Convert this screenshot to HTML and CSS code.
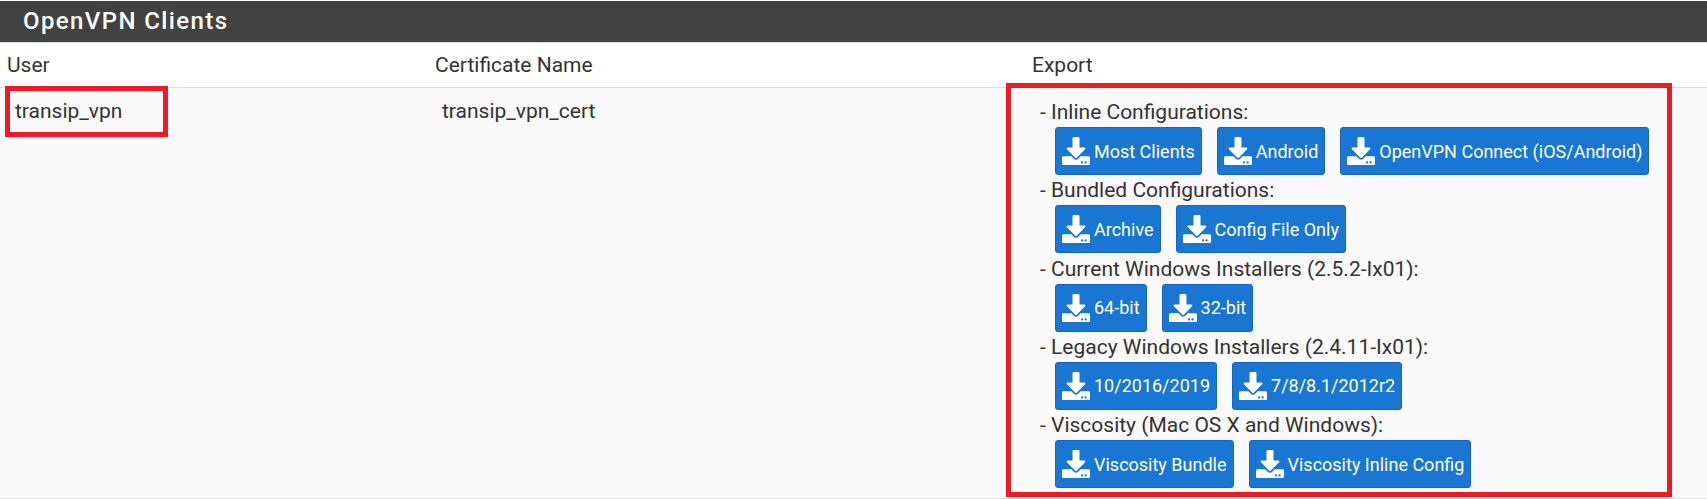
FILE: index.html
```html
<!DOCTYPE html>
<html lang="en">
<head>
<meta charset="utf-8">
<title>OpenVPN Clients</title>
<link rel="stylesheet" href="styles.css">
</head>
<body>
<svg class="defs" width="0" height="0" aria-hidden="true">
  <symbol id="dl" viewBox="0 0 512 512">
    <path d="M216 0h80c13.300 0 24 10.700 24 24v168h87.700c17.800 0 26.700 21.500 14.100 34.100L269.700 378.300c-7.500 7.500-19.800 7.500-27.300 0L90.100 226.100c-12.600-12.600-3.700-34.100 14.100-34.100H192V24c0-13.300 10.700-24 24-24zm296 376v112c0 13.300-10.700 24-24 24H24c-13.300 0-24-10.700-24-24V376c0-13.300 10.700-24 24-24h146.700l49 49c20.100 20.100 52.500 20.100 72.600 0l49-49H488c13.300 0 24 10.700 24 24zm-124 88c0-11-9-20-20-20s-20 9-20 20 9 20 20 20 20-9 20-20zm64 0c0-11-9-20-20-20s-20 9-20 20 9 20 20 20 20-9 20-20z"/>
  </symbol>
</svg>
<main class="panel">
  <h2 class="panel-title">OpenVPN Clients</h2>
  <div class="table">
    <div class="head">
      <div class="col-user">User</div>
      <div class="col-cert">Certificate Name</div>
      <div class="col-export">Export</div>
    </div>
    <div class="row">
      <div class="col-user cell">transip_vpn</div>
      <div class="col-cert cell">transip_vpn_cert</div>
      <div class="col-export cell-export">
        <div class="group">
          <div class="label">- Inline Configurations:</div>
          <div class="buttons">
            <a class="btn"><svg class="ico"><use href="#dl"/></svg>Most Clients</a>
            <a class="btn"><svg class="ico"><use href="#dl"/></svg>Android</a>
            <a class="btn"><svg class="ico"><use href="#dl"/></svg>OpenVPN Connect (iOS/Android)</a>
          </div>
        </div>
        <div class="group">
          <div class="label">- Bundled Configurations:</div>
          <div class="buttons">
            <a class="btn"><svg class="ico"><use href="#dl"/></svg>Archive</a>
            <a class="btn"><svg class="ico"><use href="#dl"/></svg>Config File Only</a>
          </div>
        </div>
        <div class="group">
          <div class="label">- Current Windows Installers (2.5.2-Ix01):</div>
          <div class="buttons">
            <a class="btn"><svg class="ico"><use href="#dl"/></svg>64-bit</a>
            <a class="btn"><svg class="ico"><use href="#dl"/></svg>32-bit</a>
          </div>
        </div>
        <div class="group">
          <div class="label">- Legacy Windows Installers (2.4.11-Ix01):</div>
          <div class="buttons">
            <a class="btn"><svg class="ico"><use href="#dl"/></svg>10/2016/2019</a>
            <a class="btn"><svg class="ico"><use href="#dl"/></svg>7/8/8.1/2012r2</a>
          </div>
        </div>
        <div class="group">
          <div class="label">- Viscosity (Mac OS X and Windows):</div>
          <div class="buttons">
            <a class="btn"><svg class="ico"><use href="#dl"/></svg>Viscosity Bundle</a>
            <a class="btn"><svg class="ico"><use href="#dl"/></svg>Viscosity Inline Config</a>
          </div>
        </div>
      </div>
    </div>
  </div>
</main>
<div class="mark mark-user"></div>
<div class="mark mark-export"></div>
</body>
</html>
```
FILE: styles.css
```css
* { box-sizing: border-box; }
html, body { margin: 0; padding: 0; }
body {
  width: 1707px;
  height: 499px;
  position: relative;
  overflow: hidden;
  background: #fff;
  font-family: Roboto, sans-serif;
  font-size: 21px;
  color: #333;
}
.defs { position: absolute; }
.panel { padding-top: 1px; }
.panel-title {
  margin: 0;
  height: 41px;
  background: #424242;
  color: #fff;
  font-size: 24px;
  font-weight: 500;
  line-height: 41px;
  letter-spacing: 1.400px;
  padding-left: 23px;
}
.head {
  display: flex;
  height: 46px;
  align-items: center;
  background: #fff;
  border-top: 1px solid #ddd;
  border-bottom: 1px solid #ddd;
}
.col-user { width: 428px; padding-left: 7px; flex: none; }
.col-cert { width: 597px; padding-left: 7px; flex: none; }
.col-export { padding-left: 7px; flex: 1; }
.row {
  display: flex;
  height: 411px;
  background: #f9f9f9;
  border-bottom: 1px solid #ddd;
}
.cell { padding: 11px 0 0 15px; line-height: 24px; }
.col-cert.cell { padding-left: 14px; }
.cell-export { padding: 12px 0 0 15px; }
.group { height: 78.300px; }
.label { line-height: 24px; height: 27px; }
.buttons { display: flex; gap: 15px; padding-left: 15px; }
.btn {
  display: flex;
  align-items: center;
  gap: 4px;
  height: 48px;
  padding: 0 6px 0 6px;
  background: #1976d2;
  border: 1px solid #1565c0;
  border-radius: 3px;
  color: #fff;
  font-size: 18px;
}
.ico { width: 28px; height: 28px; fill: #fff; flex: none; }
.mark { position: absolute; border: 5px solid #ed1c24; }
.mark-user { left: 5px; top: 86px; width: 163px; height: 51px; }
.mark-export { left: 1006px; top: 83px; width: 666px; height: 414px; }
```
